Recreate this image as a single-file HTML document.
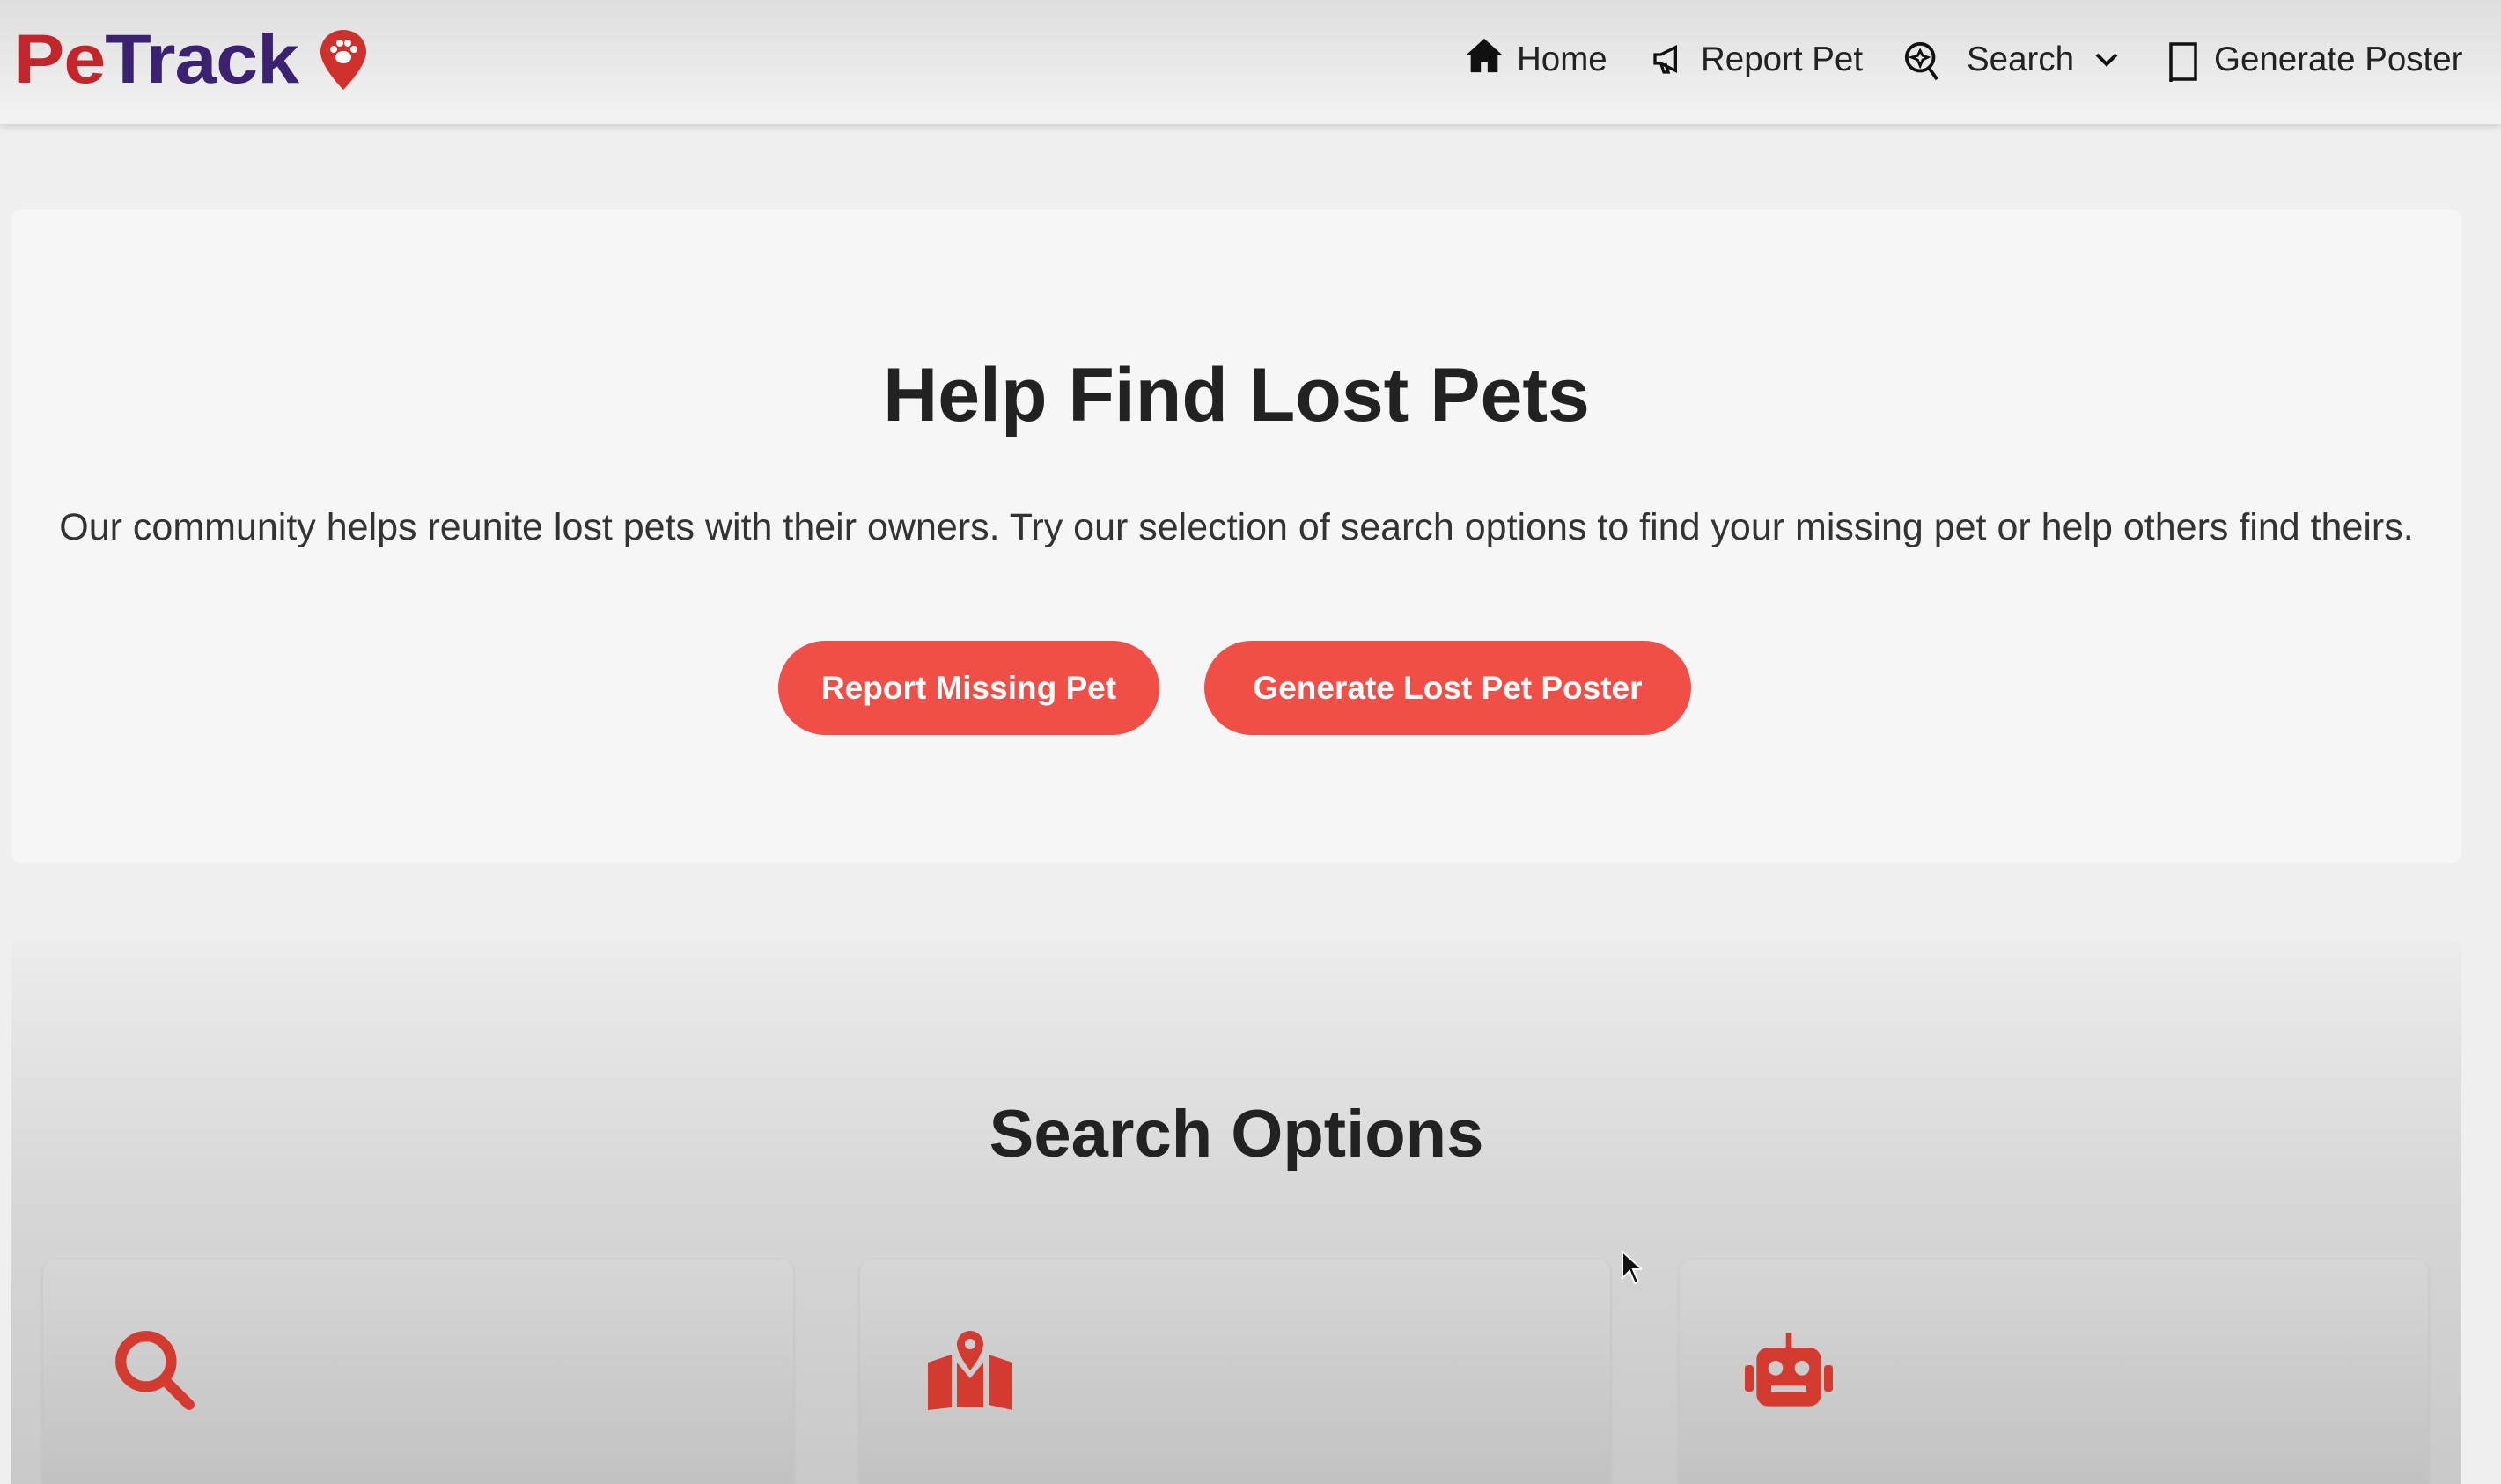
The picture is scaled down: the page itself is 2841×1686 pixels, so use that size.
<!DOCTYPE html>
<html style="overflow:hidden;width:2841px;height:1686px"><head><meta charset="utf-8"><style>
*{margin:0;padding:0;box-sizing:border-box}
body{width:2841px;height:1686px;overflow:hidden;background:#efefef;font-family:"Liberation Sans",sans-serif;color:#222;position:relative}
.hdr{position:absolute;left:0;top:0;width:2841px;height:141px;background:linear-gradient(#dedede,#f3f3f3);box-shadow:0 4px 8px rgba(0,0,0,.12)}
.logo{position:absolute;left:16px;top:28px;font-family:"Liberation Sans",sans-serif;font-weight:bold;font-size:86px;letter-spacing:-1px;line-height:1;transform:scaleY(0.92);transform-origin:left top}
.nav{position:absolute;top:44px;font-size:38.5px;color:#222;line-height:48px;white-space:nowrap}
.hero{position:absolute;left:13px;top:239px;width:2783px;height:741px;background:#f6f6f6;border-radius:10px}
h1{position:absolute;left:0;width:2809px;top:400px;text-align:center;font-size:86px;font-weight:bold;color:#222}
.p{position:absolute;left:0;width:2809px;top:575px;text-align:center;font-size:43px;color:#333;white-space:nowrap}
.btn{position:absolute;top:728px;height:107px;border-radius:54px;background:#ef4f47;color:#fff;font-weight:bold;font-size:37px;text-align:center;line-height:107px}
.sec{position:absolute;left:13px;top:1069px;width:2783px;height:617px;background:linear-gradient(#ececec,#d6d6d6 50%,#c9c9c9);border-radius:10px 10px 0 0}
h2{position:absolute;left:0;width:2809px;top:1245px;text-align:center;font-size:76px;font-weight:bold;color:#222}
.card{position:absolute;top:1431px;width:852px;height:255px;background:linear-gradient(#d6d6d6,#c2c2c2);border-radius:14px 14px 0 0;box-shadow:0 2px 6px rgba(0,0,0,.08)}
</style></head><body>
<div class="hdr">
<div class="logo"><span style="color:#c3262a">Pe</span><span style="color:#3a2270">Track</span></div>
<svg style="position:absolute;left:362px;top:32px" width="56" height="72" viewBox="0 0 56 72"><path d="M28 2C13 2 2 13 2 27c0 17 26 43 26 43s26-26 26-43C54 13 43 2 28 2z" fill="#d0302c"/><ellipse cx="28" cy="33" rx="9" ry="7" fill="#fff"/><circle cx="17" cy="24" r="4" fill="#fff"/><circle cx="24" cy="17" r="4" fill="#fff"/><circle cx="33" cy="17" r="4" fill="#fff"/><circle cx="40" cy="24" r="4" fill="#fff"/></svg>
<svg style="position:absolute;left:1663px;top:40px" width="46" height="46" viewBox="0 0 24 24"><path d="M12 2L1 12h3v10h6v-6h4v6h6V12h3z" fill="#111"/></svg>
<div class="nav" style="left:1723px">Home</div>
<svg style="position:absolute;left:1875px;top:47px" width="40" height="40" viewBox="0 0 24 24" fill="none" stroke="#111" stroke-width="2"><path d="M3 9v6h4l10 5V4L7 9z M7 15l2 6h3l-2-6"/></svg>
<div class="nav" style="left:1932px">Report Pet</div>
<svg style="position:absolute;left:2162px;top:44px" width="46" height="50" viewBox="0 0 24 26" fill="none" stroke="#111" stroke-width="2"><circle cx="10" cy="11" r="8"/><path d="M15 17l5 7"/><path d="M10 7l1.5 3 3 1-3 1.5L10 16l-1.5-3.5L5 11l3.5-1z" stroke-width="1.5"/></svg>
<div class="nav" style="left:2234px">Search</div>
<svg style="position:absolute;left:2379px;top:58px" width="28" height="20" viewBox="0 0 28 20" fill="none" stroke="#111" stroke-width="4"><path d="M3 4l11 11 11-11"/></svg>
<svg style="position:absolute;left:2462px;top:48px" width="34" height="46" viewBox="0 0 34 46" fill="none" stroke="#111" stroke-width="3.5"><rect x="4" y="2" width="28" height="40"/><path d="M4 42v3"/></svg>
<div class="nav" style="left:2515px">Generate Poster</div>
</div>
<div class="hero"></div>
<h1>Help Find Lost Pets</h1>
<div class="p">Our community helps reunite lost pets with their owners. Try our selection of search options to find your missing pet or help others find theirs.</div>
<div class="btn" style="left:884px;width:433px">Report Missing Pet</div>
<div class="btn" style="left:1368px;width:553px">Generate Lost Pet Poster</div>
<div class="sec"></div>
<h2>Search Options</h2>
<div class="card" style="left:49px"></div>
<div class="card" style="left:977px"></div>
<div class="card" style="left:1908px;width:850px"></div>
<svg style="position:absolute;left:125px;top:1506px" width="98" height="98" viewBox="0 0 24 24" fill="none" stroke="#d33a30" stroke-width="3"><circle cx="10" cy="10" r="7"/><path d="M15 15l7 7" stroke-linecap="round"/></svg>
<svg style="position:absolute;left:1053px;top:1512px" width="98" height="90" viewBox="0 0 32 30" fill="#d33a30"><path d="M16 0a5 5 0 0 0-5 5c0 4 5 10 5 10s5-6 5-10a5 5 0 0 0-5-5z"/><circle cx="16" cy="5" r="2" fill="#cfcfcf"/><path d="M0 12l9-3v20L0 30zM11 12l5 6 5-6v17l-10 0zM23 9l9 3v18l-9-2z"/></svg>
<svg style="position:absolute;left:1982px;top:1514px" width="100" height="84" viewBox="0 0 30 25" fill="#d33a30"><rect x="14" y="0" width="2" height="5"/><rect x="4" y="5" width="22" height="20" rx="4"/><rect x="0" y="11" width="3" height="9" rx="1"/><rect x="27" y="11" width="3" height="9" rx="1"/><circle cx="10.5" cy="12" r="2.5" fill="#ccc"/><circle cx="19.5" cy="12" r="2.5" fill="#ccc"/><rect x="9" y="18" width="12" height="2" fill="#ccc"/></svg>
<svg style="position:absolute;left:1841px;top:1420px" width="24" height="40" viewBox="0 0 12 20"><path d="M1 1v15l4-4 3 7 2-1-3-7h5z" fill="#111" stroke="#fff" stroke-width="1"/></svg>
</body></html>
